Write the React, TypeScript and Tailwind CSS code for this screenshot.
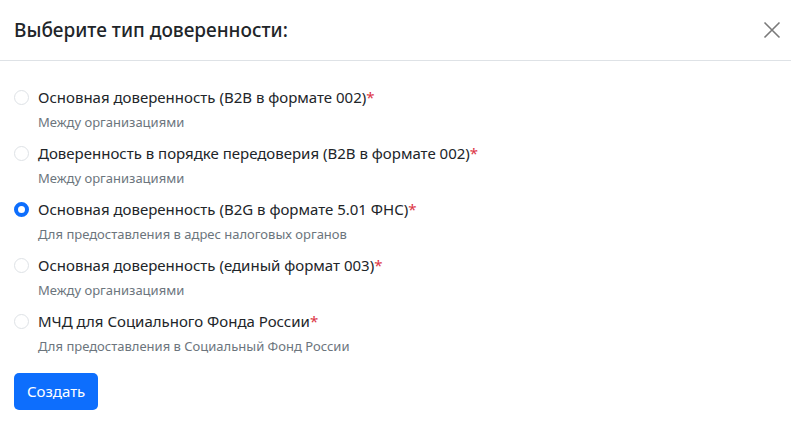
import { useState } from "react"

const options = [
  { title: "Основная доверенность (B2B в формате 002)", note: "Между организациями" },
  { title: "Доверенность в порядке передоверия (B2B в формате 002)", note: "Между организациями" },
  { title: "Основная доверенность (B2G в формате 5.01 ФНС)", note: "Для предоставления в адрес налоговых органов" },
  { title: "Основная доверенность (единый формат 003)", note: "Между организациями" },
  { title: "МЧД для Социального Фонда России", note: "Для предоставления в Социальный Фонд России" },
]

export default function App() {
  const [selected, setSelected] = useState(2)

  return (
    <div className="w-[791px] h-[423px] bg-white text-[#212529] font-['Noto_Sans','Open_Sans',sans-serif]">
      <div className="flex items-center justify-between h-[61px] pl-[14px] pr-[7px] border-b border-[#dee2e6]">
        <h2 className="text-[19px] font-medium leading-none">Выберите тип доверенности:</h2>
        <button className="w-[24px] h-[24px] flex items-center justify-center text-[#7a7a7a]">
          <svg width="18" height="18" viewBox="0 0 18 18" fill="none" stroke="currentColor" strokeWidth="1.6">
            <path d="M1.5 1.5L16.5 16.5M16.5 1.5L1.5 16.5" />
          </svg>
        </button>
      </div>
      <div className="px-[14px] pt-[24px]">
        <div className="flex flex-col">
          {options.map((opt, i) => (
            <label key={i} className="flex gap-[9px] h-[56px] cursor-pointer" onClick={() => setSelected(i)}>
              <span
                className={
                  i === selected
                    ? "mt-[5px] w-[15px] h-[15px] shrink-0 rounded-full border-[4px] border-[#0d6efd] bg-white"
                    : "mt-[5px] w-[15px] h-[15px] shrink-0 rounded-full border border-[#dee2e6] bg-white"
                }
              />
              <span className="flex flex-col">
                <span className="text-[15px] leading-[24px]">
                  {opt.title}
                  <span className="text-[#dc3545]">*</span>
                </span>
                <span className="text-[13px] leading-[20px] text-[#6c757d] mt-[3px]">{opt.note}</span>
              </span>
            </label>
          ))}
        </div>
        <button className="mt-[8px] h-[37px] px-[13px] rounded-[5px] bg-[#0d6efd] text-white text-[15px]">
          Создать
        </button>
      </div>
    </div>
  )
}
